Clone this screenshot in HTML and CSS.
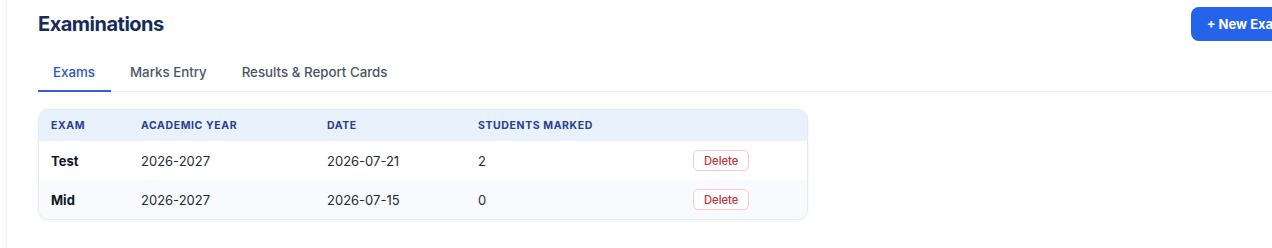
FILE: index.html
```html
<!DOCTYPE html>
<html lang="en">
<head>
<meta charset="utf-8">
<title>Examinations</title>
<link rel="stylesheet" href="styles.css">
</head>
<body>
<div class="shell">
  <main class="page">
    <header class="page-header">
      <h1 class="title">Examinations</h1>
      <button class="btn-primary">+ New Exam</button>
    </header>
    <nav class="tabs">
      <a class="tab active">Exams</a>
      <a class="tab">Marks Entry</a>
      <a class="tab">Results &amp; Report Cards</a>
    </nav>
    <div class="card">
      <table class="grid">
        <colgroup>
          <col class="c1"><col class="c2"><col class="c3"><col class="c4"><col class="c5">
        </colgroup>
        <thead>
          <tr><th>Exam</th><th>Academic Year</th><th>Date</th><th>Students Marked</th><th></th></tr>
        </thead>
        <tbody>
          <tr><td class="name">Test</td><td>2026-2027</td><td>2026-07-21</td><td>2</td><td><button class="btn-del">Delete</button></td></tr>
          <tr class="alt"><td class="name">Mid</td><td>2026-2027</td><td>2026-07-15</td><td>0</td><td><button class="btn-del">Delete</button></td></tr>
        </tbody>
      </table>
    </div>
  </main>
</div>
</body>
</html>
```
FILE: styles.css
```css
html, body {
  margin: 0;
  padding: 0;
  background: #ffffff;
  overflow: hidden;
  font-family: Inter, "Noto Sans", sans-serif;
}
.shell {
  padding-left: 6px;
  height: 248px;
}
.page {
  border-left: 1px solid #eef0f4;
  height: 100%;
  width: 1295px;
  padding: 7px 0 0 31px;
  box-sizing: border-box;
}
.page-header {
  display: flex;
  justify-content: space-between;
  align-items: center;
  height: 34px;
}
.title {
  margin: 0;
  font-size: 20px;
  font-weight: 700;
  color: #172b5c;
  letter-spacing: -0.5px;
}
.btn-primary {
  height: 34px;
  padding: 0 16px;
  border: none;
  border-radius: 8px;
  background: #2563eb;
  color: #ffffff;
  font-family: inherit;
  font-size: 13px;
  font-weight: 700;
  white-space: nowrap;
}
.tabs {
  margin-top: 13px;
  display: flex;
  gap: 4px;
  border-bottom: 1px solid #eceff3;
}
.tab {
  padding: 0 16px 0 15px;
  height: 36px;
  display: flex;
  align-items: center;
  font-size: 13.3px;
  font-weight: 500;
  color: #4b5563;
  border-bottom: 2px solid transparent;
  margin-bottom: -1px;
}
.tab.active {
  color: #2f55c4;
  border-bottom-color: #3b5bd6;
}
.card {
  margin-top: 17px;
  width: 768px;
  border: 1px solid #e3eaf5;
  border-radius: 10px;
  overflow: hidden;
  box-shadow: 0 1px 3px rgba(30, 60, 120, 0.06);
}
.grid {
  width: 100%;
  border-collapse: collapse;
  table-layout: fixed;
}
.c1 { width: 90px; }
.c2 { width: 186px; }
.c3 { width: 151px; }
.c4 { width: 215px; }
.c5 { width: auto; }
.grid th {
  background: #e9f1fd;
  height: 31px;
  padding: 0 12px;
  text-align: left;
  font-size: 10.5px;
  font-weight: 700;
  letter-spacing: 0.6px;
  text-transform: uppercase;
  color: #2a3f8c;
}
.grid td {
  height: 39px;
  padding: 0 12px;
  font-size: 13px;
  color: #1f2937;
}
.grid tr.alt td { background: #f8fafd; }
.grid td.name {
  font-weight: 700;
  color: #111827;
}
.btn-del {
  height: 21px;
  padding: 0 10px;
  border: 1px solid #f3c9cd;
  border-radius: 5px;
  background: #ffffff;
  color: #c53038;
  font-family: inherit;
  font-size: 11.2px;
  font-weight: 500;
}
```
